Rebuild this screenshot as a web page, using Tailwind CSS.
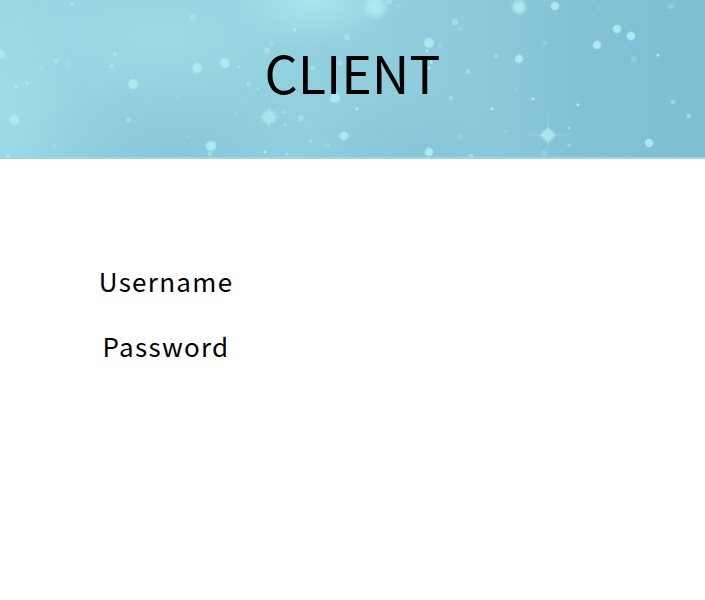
<!DOCTYPE html>
<html lang="en">
<head>
<meta charset="utf-8">
<meta name="viewport" content="width=device-width, initial-scale=1">
<title>Client</title>
<script src="https://cdn.jsdelivr.net/npm/@tailwindcss/browser@4"></script>
</head>
<body class="min-h-screen bg-white text-black font-['Noto_Sans_CJK_SC','Noto_Sans',sans-serif]">
<header class="relative isolate flex items-center justify-center overflow-hidden border-b-2 border-[#9dd7e3] bg-[#8dcadb] pt-8 pb-[45px]">
  <svg class="absolute inset-0 -z-10 h-full w-full" viewBox="0 0 705 157" preserveAspectRatio="xMidYMid slice" aria-hidden="true">
    <defs>
      <linearGradient id="sky">
        <stop offset="0" stop-color="#9bd7e3"/><stop offset=".12" stop-color="#96d3e1"/><stop offset=".5" stop-color="#91cede"/><stop offset=".68" stop-color="#8ccadb"/><stop offset=".82" stop-color="#83c1d5"/><stop offset="1" stop-color="#80bfd3"/>
      </linearGradient>
      <radialGradient id="light"><stop offset="0" stop-color="#a9e6ee"/><stop offset=".5" stop-color="#a5e1ea" stop-opacity=".6"/><stop offset="1" stop-color="#9edbe6" stop-opacity="0"/></radialGradient>
      <radialGradient id="haze"><stop offset="0" stop-color="#a1dee7" stop-opacity=".65"/><stop offset="1" stop-color="#a1dee7" stop-opacity="0"/></radialGradient>
      <radialGradient id="shade"><stop offset="0" stop-color="#80bfd4" stop-opacity=".55"/><stop offset="1" stop-color="#80bfd4" stop-opacity="0"/></radialGradient>
      <radialGradient id="orb"><stop offset="0" stop-color="#afebf1"/><stop offset=".5" stop-color="#aae7ee" stop-opacity=".95"/><stop offset="1" stop-color="#a5e1ea" stop-opacity="0"/></radialGradient>
      <radialGradient id="dot"><stop offset="0" stop-color="#afebf1"/><stop offset=".68" stop-color="#abe7ee"/><stop offset="1" stop-color="#abe7ee" stop-opacity="0"/></radialGradient>
    </defs>
    <rect width="705" height="157" fill="url(#sky)"/>
    <ellipse cx="165" cy="35" rx="170" ry="65" fill="url(#haze)"/>
    <ellipse cx="0" cy="95" rx="75" ry="100" fill="url(#haze)"/>
    <ellipse cx="170" cy="155" rx="150" ry="80" fill="url(#shade)"/>
    <ellipse cx="410" cy="160" rx="120" ry="70" fill="url(#shade)"/>
    <ellipse cx="312" cy="0" rx="95" ry="50" fill="url(#light)"/>
    <g fill="url(#orb)">
      <circle cx="375" cy="7" r="14"/><circle cx="519" cy="7" r="9"/>
      <circle cx="269" cy="117" r="9"/><circle cx="548" cy="135" r="8"/>
    </g>
    <g fill="#a9e5ed">
      <path d="M269 108l2 7 7 2-7 2-2 7-2-7-7-2 7-2z"/>
      <path d="M269 97l1 19 19 1-19 1-1 19-1-19-19-1 19-1z" opacity=".45"/>
      <path d="M548 127l3 5 5 3-5 3-3 5-3-5-5-3 5-3z"/>
      <path d="M548 108l1 26 23 1-23 1-1 21-1-21-23-1 23-1z" opacity=".4"/>
    </g>
    <g fill="url(#dot)">
      <circle cx="0" cy="54" r="6"/><circle cx="14" cy="120" r="6"/><circle cx="133" cy="84" r="6"/>
      <circle cx="197" cy="68" r="6"/><circle cx="225" cy="63" r="6"/><circle cx="211" cy="146" r="6"/>
      <circle cx="429" cy="43" r="6"/><circle cx="335" cy="98" r="6"/><circle cx="344" cy="136" r="5"/>
      <circle cx="429" cy="152" r="5"/><circle cx="555" cy="6" r="5"/><circle cx="617" cy="29" r="5"/>
      <circle cx="631" cy="36" r="5"/><circle cx="597" cy="45" r="5"/><circle cx="519" cy="59" r="5"/>
      <circle cx="649" cy="143" r="5"/>
      <circle cx="16" cy="87" r="2"/><circle cx="27" cy="83" r="2"/><circle cx="8" cy="156" r="2"/>
      <circle cx="265" cy="152" r="2"/><circle cx="357" cy="109" r="2"/><circle cx="492" cy="109" r="2"/>
      <circle cx="533" cy="99" r="2"/><circle cx="578" cy="105" r="2"/><circle cx="658" cy="55" r="2"/>
      <circle cx="295" cy="30" r="2"/><circle cx="431" cy="62" r="2"/><circle cx="429" cy="68" r="2"/><circle cx="427" cy="51" r="2"/>
    </g>
    <g fill="url(#dot)" opacity=".6">
      <circle cx="72" cy="4" r="3"/><circle cx="193" cy="17" r="4"/><circle cx="115" cy="54" r="3"/>
      <circle cx="56" cy="61" r="3"/><circle cx="111" cy="66" r="3"/><circle cx="129" cy="120" r="3"/>
      <circle cx="210" cy="154" r="3"/><circle cx="267" cy="51" r="4"/><circle cx="313" cy="68" r="3"/>
      <circle cx="340" cy="63" r="3"/><circle cx="347" cy="37" r="4"/><circle cx="389" cy="1" r="4"/>
      <circle cx="455" cy="22" r="4"/><circle cx="468" cy="72" r="3"/><circle cx="496" cy="56" r="3"/>
      <circle cx="249" cy="84" r="3"/><circle cx="258" cy="89" r="2"/><circle cx="301" cy="118" r="4"/>
      <circle cx="285" cy="112" r="2"/><circle cx="285" cy="125" r="2"/><circle cx="311" cy="141" r="2"/>
      <circle cx="287" cy="154" r="2"/><circle cx="451" cy="98" r="3"/><circle cx="569" cy="128" r="2"/>
      <circle cx="569" cy="145" r="2"/><circle cx="673" cy="102" r="3"/><circle cx="689" cy="116" r="3"/>
      <circle cx="239" cy="67" r="2"/><circle cx="471" cy="156" r="3"/>
    </g>
    <g fill="url(#dot)" opacity=".3">
      <circle cx="41" cy="68" r="3"/><circle cx="68" cy="64" r="3"/><circle cx="178" cy="98" r="3"/>
      <circle cx="187" cy="136" r="2"/><circle cx="54" cy="146" r="3"/><circle cx="327" cy="146" r="4"/>
      <circle cx="460" cy="137" r="4"/><circle cx="272" cy="43" r="3"/><circle cx="440" cy="45" r="3"/>
      <circle cx="460" cy="29" r="3"/><circle cx="545" cy="43" r="3"/><circle cx="544" cy="153" r="4"/>
      <circle cx="634" cy="59" r="4"/><circle cx="671" cy="6" r="4"/><circle cx="398" cy="6" r="3"/>
      <circle cx="237" cy="114" r="2"/><circle cx="506" cy="131" r="2"/><circle cx="517" cy="89" r="2"/>
      <circle cx="600" cy="8" r="2"/><circle cx="272" cy="153" r="2"/>
    </g>
  </svg>
  <h1 class="text-[52px] leading-20">CLIENT</h1>
</header>
<main class="px-[14%] pt-[99px]">
  <form class="grid grid-cols-[auto_1fr] gap-x-6 gap-y-5 text-[26px] leading-[45px]">
    <label for="username" class="text-center tracking-wider">Username</label>
    <input id="username" name="username" type="text" autocomplete="username" class="w-full min-w-0 bg-transparent outline-none">
    <label for="password" class="text-center tracking-wider">Password</label>
    <input id="password" name="password" type="password" autocomplete="current-password" class="w-full min-w-0 bg-transparent outline-none">
  </form>
</main>
</body>
</html>
